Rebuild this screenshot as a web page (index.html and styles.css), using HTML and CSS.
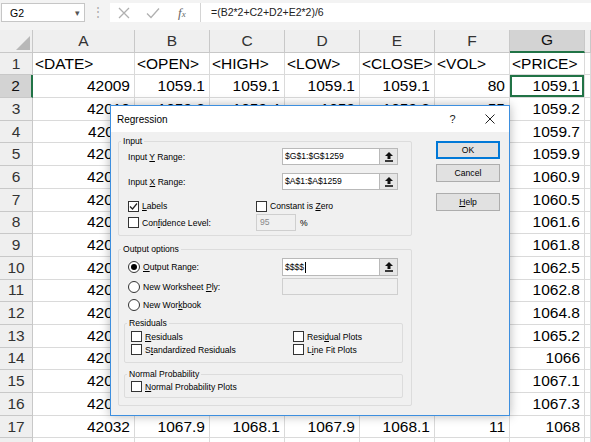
FILE: index.html
```html
<!DOCTYPE html>
<html lang="en">
<head>
  <meta charset="UTF-8">
  <title>Regression - Excel</title>
  <link rel="stylesheet" href="styles.css">
</head>
<body>
  <!-- formula bar -->
  <div class="topbar">
    <div class="name-box"><span>G2</span><span class="caret">&#9662;</span></div>
    <div class="grip">&#8942;</div>
    <div class="fx-tools">
      <svg class="tool" width="12" height="12" viewBox="0 0 12 12"><path d="M1 1 L11 11 M11 1 L1 11" stroke="#b0b0b0" stroke-width="1.3" fill="none"/></svg>
      <svg class="tool" width="14" height="12" viewBox="0 0 14 12"><path d="M1 6.5 L5 10.5 L13 1.5" stroke="#b0b0b0" stroke-width="1.3" fill="none"/></svg>
      <span class="tool fx">f<span>x</span></span>
    </div>
    <div class="formula">=(B2*2+C2+D2+E2*2)/6</div>
  </div>

  <!-- worksheet (cells hidden behind the dialog are left blank) -->
  <div class="sheet">
    <div class="corner"><svg width="14" height="14" viewBox="0 0 14 14"><path d="M14 0 V14 H0 Z" fill="#b8b8b8"/></svg></div>
    <div class="ch">A</div><div class="ch">B</div><div class="ch">C</div><div class="ch">D</div><div class="ch">E</div><div class="ch">F</div><div class="ch active">G</div><div class="ch"></div>

    <div class="rh">1</div><div class="c">&lt;DATE&gt;</div><div class="c">&lt;OPEN&gt;</div><div class="c">&lt;HIGH&gt;</div><div class="c">&lt;LOW&gt;</div><div class="c">&lt;CLOSE&gt;</div><div class="c">&lt;VOL&gt;</div><div class="c">&lt;PRICE&gt;</div><div class="c"></div>
    <div class="rh active">2</div><div class="c n">42009</div><div class="c n">1059.1</div><div class="c n">1059.1</div><div class="c n">1059.1</div><div class="c n">1059.1</div><div class="c n">80</div><div class="c n sel">1059.1</div><div class="c"></div>
    <div class="rh">3</div><div class="c n">42010</div><div class="c n">1059.2</div><div class="c n">1059.4</div><div class="c n">1059</div><div class="c n">1059.3</div><div class="c n">55</div><div class="c n">1059.2</div><div class="c"></div>
    <div class="rh">4</div><div class="c n">42011</div><div class="c"></div><div class="c"></div><div class="c"></div><div class="c"></div><div class="c"></div><div class="c n">1059.7</div><div class="c"></div>
    <div class="rh">5</div><div class="c n">42012</div><div class="c"></div><div class="c"></div><div class="c"></div><div class="c"></div><div class="c"></div><div class="c n">1059.9</div><div class="c"></div>
    <div class="rh">6</div><div class="c n">42013</div><div class="c"></div><div class="c"></div><div class="c"></div><div class="c"></div><div class="c"></div><div class="c n">1060.9</div><div class="c"></div>
    <div class="rh">7</div><div class="c n">42016</div><div class="c"></div><div class="c"></div><div class="c"></div><div class="c"></div><div class="c"></div><div class="c n">1060.5</div><div class="c"></div>
    <div class="rh">8</div><div class="c n">42017</div><div class="c"></div><div class="c"></div><div class="c"></div><div class="c"></div><div class="c"></div><div class="c n">1061.6</div><div class="c"></div>
    <div class="rh">9</div><div class="c n">42018</div><div class="c"></div><div class="c"></div><div class="c"></div><div class="c"></div><div class="c"></div><div class="c n">1061.8</div><div class="c"></div>
    <div class="rh">10</div><div class="c n">42019</div><div class="c"></div><div class="c"></div><div class="c"></div><div class="c"></div><div class="c"></div><div class="c n">1062.5</div><div class="c"></div>
    <div class="rh">11</div><div class="c n">42020</div><div class="c"></div><div class="c"></div><div class="c"></div><div class="c"></div><div class="c"></div><div class="c n">1062.8</div><div class="c"></div>
    <div class="rh">12</div><div class="c n">42023</div><div class="c"></div><div class="c"></div><div class="c"></div><div class="c"></div><div class="c"></div><div class="c n">1064.8</div><div class="c"></div>
    <div class="rh">13</div><div class="c n">42024</div><div class="c"></div><div class="c"></div><div class="c"></div><div class="c"></div><div class="c"></div><div class="c n">1065.2</div><div class="c"></div>
    <div class="rh">14</div><div class="c n">42025</div><div class="c"></div><div class="c"></div><div class="c"></div><div class="c"></div><div class="c"></div><div class="c n">1066</div><div class="c"></div>
    <div class="rh">15</div><div class="c n">42026</div><div class="c"></div><div class="c"></div><div class="c"></div><div class="c"></div><div class="c"></div><div class="c n">1067.1</div><div class="c"></div>
    <div class="rh">16</div><div class="c n">42027</div><div class="c"></div><div class="c"></div><div class="c"></div><div class="c"></div><div class="c"></div><div class="c n">1067.3</div><div class="c"></div>
    <div class="rh">17</div><div class="c n">42032</div><div class="c n">1067.9</div><div class="c n">1068.1</div><div class="c n">1067.9</div><div class="c n">1068.1</div><div class="c n">11</div><div class="c n">1068</div><div class="c"></div>
    <div class="rh"></div><div class="c"></div><div class="c"></div><div class="c"></div><div class="c"></div><div class="c"></div><div class="c"></div><div class="c"></div><div class="c"></div>
  </div>

  <!-- Regression dialog -->
  <div class="dialog">
    <div class="dialog-title">
      <span class="title-text">Regression</span>
      <span class="title-btn">?</span>
      <span class="title-btn"><svg width="10" height="10" viewBox="0 0 10 10"><path d="M0.5 0.5 L9.5 9.5 M9.5 0.5 L0.5 9.5" stroke="#222" stroke-width="1" fill="none"/></svg></span>
    </div>

    <div class="dialog-body">
      <div class="main-col">
        <fieldset class="group input-group">
          <legend>Input</legend>
          <div class="range-row">
            <span class="range-label">Input <u>Y</u> Range:</span>
            <div class="range"><span class="range-text">$G$1:$G$1259</span><span class="pick"><svg width="8" height="10" viewBox="0 0 8 10"><path d="M4 0 L8 4 H5.5 V7 H2.5 V4 H0 Z" fill="#111"/><rect x="0" y="8.2" width="8" height="1.6" fill="#111"/></svg></span></div>
          </div>
          <div class="range-row second">
            <span class="range-label">Input <u>X</u> Range:</span>
            <div class="range"><span class="range-text">$A$1:$A$1259</span><span class="pick"><svg width="8" height="10" viewBox="0 0 8 10"><path d="M4 0 L8 4 H5.5 V7 H2.5 V4 H0 Z" fill="#111"/><rect x="0" y="8.2" width="8" height="1.6" fill="#111"/></svg></span></div>
          </div>
          <div class="option-row labels-row">
            <label class="opt wide"><span class="cb"><svg width="9" height="9" viewBox="0 0 9 9"><path d="M1 4.5 L3.5 7 L8 1.5" stroke="#222" stroke-width="1.2" fill="none"/></svg></span><span><u>L</u>abels</span></label>
            <label class="opt"><span class="cb"></span><span>Constant is <u>Z</u>ero</span></label>
          </div>
          <div class="option-row conf-row">
            <label class="opt wide"><span class="cb"></span><span>Con<u>f</u>idence Level:</span></label>
            <span class="conf-box">95</span>
            <span class="pct">%</span>
          </div>
        </fieldset>

        <fieldset class="group output-group">
          <legend>Output options</legend>
          <div class="radio-row first">
            <label class="opt range-label"><span class="rb on"></span><span><u>O</u>utput Range:</span></label>
            <div class="range"><span class="range-text">$$$$<span class="cursor"></span></span><span class="pick"><svg width="8" height="10" viewBox="0 0 8 10"><path d="M4 0 L8 4 H5.5 V7 H2.5 V4 H0 Z" fill="#111"/><rect x="0" y="8.2" width="8" height="1.6" fill="#111"/></svg></span></div>
          </div>
          <div class="radio-row">
            <label class="opt range-label"><span class="rb"></span><span>New Worksheet <u>P</u>ly:</span></label>
            <div class="range disabled"></div>
          </div>
          <div class="radio-row plain">
            <label class="opt"><span class="rb"></span><span>New Wor<u>k</u>book</span></label>
          </div>

          <fieldset class="group sub-group residuals">
            <legend>Residuals</legend>
            <div class="check-grid">
              <label class="opt"><span class="cb"></span><span><u>R</u>esiduals</span></label>
              <label class="opt"><span class="cb"></span><span>Resi<u>d</u>ual Plots</span></label>
              <label class="opt"><span class="cb"></span><span>S<u>t</u>andardized Residuals</span></label>
              <label class="opt"><span class="cb"></span><span>L<u>i</u>ne Fit Plots</span></label>
            </div>
          </fieldset>

          <fieldset class="group sub-group normal">
            <legend>Normal Probability</legend>
            <label class="opt"><span class="cb"></span><span><u>N</u>ormal Probability Plots</span></label>
          </fieldset>
        </fieldset>
      </div>

      <div class="button-col">
        <button class="btn default">OK</button>
        <button class="btn">Cancel</button>
        <button class="btn help"><u>H</u>elp</button>
      </div>
    </div>
  </div>
</body>
</html>
```

FILE: styles.css
```css
/* Excel window colours */
:root {
  --grid-line: #dadada;
  --head-bg: #efefef;
  --head-line: #c8c8c8;
  --excel-green: #217346;
  --dialog-bg: #f0f0f0;
  --group-line: #dcdcdc;
  --win-blue: #3d8fdf;
}

* {
  margin: 0;
  padding: 0;
  box-sizing: border-box;
}

body {
  width: 591px;
  height: 442px;
  overflow: hidden;
  position: relative;
  background: #fff;
  color: #000;
  font-family: "Liberation Sans", Arial, sans-serif;
}

/* ---- formula bar ---- */
.topbar {
  height: 30px;
  background: #f3f3f3;
  display: flex;
  align-items: flex-start;
  padding-top: 3px;
  font-size: 10.5px;
}

.name-box {
  width: 84px;
  height: 19px;
  margin-left: 1px;
  background: #fff;
  border: 1px solid #c6c6c6;
  display: flex;
  align-items: center;
  padding-left: 8px;
}

.name-box .caret {
  margin-left: auto;
  margin-right: 4px;
  font-size: 9px;
  color: #555;
}

.grip {
  width: 25px;
  height: 19px;
  text-align: center;
  line-height: 19px;
  color: #a8a8a8;
  font-size: 12px;
}

.fx-tools {
  width: 90px;
  height: 19px;
  background: #fff;
  display: flex;
  align-items: center;
  padding-left: 8px;
  gap: 16px;
}

.fx {
  font-family: "Liberation Serif", serif;
  font-style: italic;
  font-size: 13px;
  color: #666;
  margin-left: 2px;
}

.fx span {
  font-size: 9px;
}

.formula {
  flex: 1;
  height: 19px;
  background: #fff;
  border-left: 1px solid #d4d4d4;
  padding-left: 10px;
  line-height: 18px;
  color: #222;
}

/* ---- grid ---- */
.sheet {
  display: grid;
  grid-template-columns: 33px 102px repeat(6, 75px) 1fr;
  grid-auto-rows: 22.7px;
  font-size: 15.5px;
}

.corner,
.ch,
.rh {
  background: var(--head-bg);
  border-right: 1px solid var(--head-line);
  border-bottom: 1px solid var(--head-line);
  color: #333;
  display: flex;
  align-items: center;
  justify-content: center;
}

.corner {
  align-items: flex-end;
  justify-content: flex-end;
  padding: 0 2px 2px 0;
}

.ch.active {
  background: #d3d3d3;
  border-bottom: 2px solid var(--excel-green);
  color: #111;
}

.rh.active {
  background: #d3d3d3;
  border-right: 2px solid var(--excel-green);
  color: #111;
}

.c {
  border-right: 1px solid var(--grid-line);
  border-bottom: 1px solid var(--grid-line);
  padding: 0 2px;
  display: flex;
  align-items: center;
  white-space: nowrap;
  overflow: hidden;
}

.c.n {
  justify-content: flex-end;
  padding-right: 4px;
}

.c.sel {
  box-shadow: inset 0 0 0 2px var(--excel-green);
}

/* ---- dialog ---- */
.dialog {
  position: absolute;
  left: 110px;
  top: 105px;
  width: 400px;
  height: 311px;
  background: var(--dialog-bg);
  border: 1px solid var(--win-blue);
  box-shadow: 0 0 10px rgba(0, 0, 0, 0.28);
  font-size: 8.6px;
}

.dialog-title {
  height: 26px;
  background: #fff;
  display: flex;
  align-items: center;
  padding-left: 6px;
  padding-right: 1px;
}

.title-text {
  font-size: 10px;
  flex: 1;
}

.title-btn {
  width: 37px;
  text-align: center;
  font-size: 11px;
  color: #222;
  display: flex;
  justify-content: center;
}

.dialog-body {
  display: flex;
  padding: 4px 0 0 7px;
}

.main-col {
  width: 294px;
}

.group {
  border: 1px solid var(--group-line);
  border-radius: 2px;
  min-width: 0;
  padding: 0 0 0 9px;
}

.group legend {
  padding: 0 2px;
  margin-left: -7px;
  line-height: 10px;
}

.input-group {
  height: 100px;
}

.range-row {
  display: flex;
  align-items: center;
  height: 17px;
  margin-top: 2px;
}

.range-row.second {
  margin-top: 8px;
}

.range-label {
  width: 154px;
}

.range {
  width: 116px;
  height: 17px;
  background: #fff;
  border: 1px solid #b9b9b9;
  display: flex;
}

.range.disabled {
  background: #f0f0f0;
  border-color: #cfcfcf;
}

.range-text {
  flex: 1;
  padding-left: 2px;
  line-height: 15px;
  display: flex;
  align-items: center;
}

.cursor {
  display: inline-block;
  width: 1px;
  height: 11px;
  background: #000;
  margin-left: 1px;
}

.pick {
  width: 18px;
  background: #e6e6e6;
  border-left: 1px solid #b9b9b9;
  display: flex;
  align-items: center;
  justify-content: center;
}

.option-row {
  display: flex;
  align-items: center;
}

.labels-row {
  height: 14px;
  margin-top: 9px;
}

.conf-row {
  height: 17px;
  margin-top: 1px;
}

.opt {
  display: flex;
  align-items: center;
  white-space: nowrap;
}

.opt.wide {
  width: 128px;
}

.cb,
.rb {
  width: 11px;
  height: 11px;
  background: #fff;
  border: 1px solid #333;
  margin-right: 3px;
  flex: none;
  display: flex;
  align-items: center;
  justify-content: center;
}

.rb {
  border-radius: 50%;
  width: 12px;
  height: 12px;
}

.rb.on::after {
  content: "";
  width: 6px;
  height: 6px;
  border-radius: 50%;
  background: #000;
}

.conf-box {
  width: 40px;
  height: 17px;
  border: 1px solid #cfcfcf;
  background: #f0f0f0;
  color: #8a8a8a;
  padding-left: 3px;
  line-height: 15px;
}

.pct {
  margin-left: 4px;
}

.output-group {
  margin-top: 8px;
  height: 162px;
}

.radio-row {
  display: flex;
  align-items: center;
  height: 17px;
  margin-top: 2px;
}

.radio-row.first {
  height: 18px;
  margin-top: 4px;
}

.radio-row.first .range {
  height: 18px;
}

.radio-row.plain {
  height: 14px;
  margin-top: 3px;
}

.sub-group {
  width: 279px;
  margin-left: -4px;
  padding-left: 6px;
  margin-top: 6px;
}

.sub-group legend {
  margin-left: -4px;
}

.residuals {
  height: 45px;
}

.check-grid {
  display: grid;
  grid-template-columns: 162px 1fr;
  grid-auto-rows: 13px;
  margin-top: 2px;
  align-items: center;
}

.normal {
  height: 29px;
}

.normal .opt {
  height: 13px;
  margin-top: 1px;
}

.button-col {
  margin-left: 24px;
  margin-top: 5px;
  display: flex;
  flex-direction: column;
  width: 64px;
}

.btn {
  height: 18px;
  background: #e1e1e1;
  border: 1px solid #adadad;
  font-family: inherit;
  font-size: 8.6px;
  color: #000;
}

.btn.default {
  border: 2px solid #0078d7;
}

.btn + .btn {
  margin-top: 5px;
}

.btn.help {
  margin-top: 11px;
}
```
